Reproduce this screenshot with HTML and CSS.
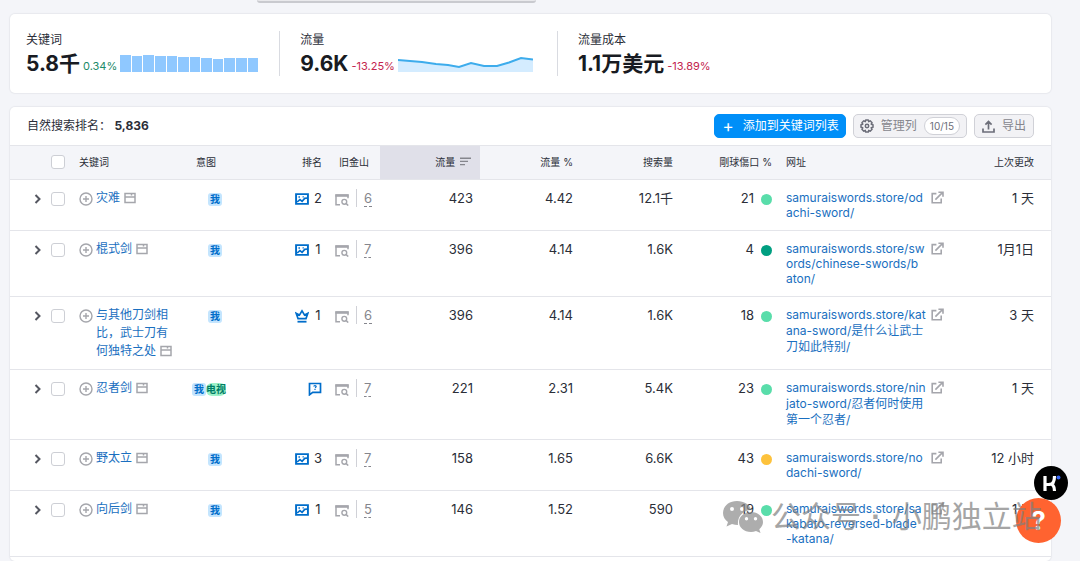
FILE: index.html
```html
<!DOCTYPE html>
<html lang="zh-CN">
<head>
<meta charset="utf-8">
<title>自然搜索排名</title>
<link rel="stylesheet" href="styles.css">
</head>
<body>
<svg class="sprite" aria-hidden="true">
  <symbol id="chevron" viewBox="0 0 8 12"><path d="M1.5 2l4 4-4 4" fill="none" stroke="currentColor" stroke-width="2"/></symbol>
  <symbol id="plus" viewBox="0 0 14 14"><circle cx="7" cy="7" r="6" fill="none" stroke="currentColor" stroke-width="1.4"/><path d="M7 4v6M4 7h6" stroke="currentColor" stroke-width="1.4"/></symbol>
  <symbol id="page" viewBox="0 0 12 12"><path d="M1 1.500h10v9H1zM1 5h10M7.500 1.500v2" fill="none" stroke="currentColor" stroke-width="1.500"/></symbol>
  <symbol id="image" viewBox="0 0 13 12"><path d="M1 1.500h11v9H1z" fill="none" stroke="currentColor" stroke-width="1.800"/><path d="M2 8.800l2.600-2.300 2 1.700L9 5.400l2.500-.4" fill="none" stroke="currentColor" stroke-width="1.500"/><path d="M3.200 3.500h1.400v1.400H3.200zM7 3.400h1.200v1.200H7z" fill="currentColor"/></symbol>
  <symbol id="crown" viewBox="0 0 14 14"><path d="M3 9.600L1.200 4.300l3.200 1.800L7 1.800l2.600 4.300 3.200-1.800L11 9.600z" fill="none" stroke="currentColor" stroke-width="1.700"/><path d="M2.500 12.700h9" stroke="currentColor" stroke-width="1.800"/></symbol>
  <symbol id="question" viewBox="0 0 13 14"><path d="M1 1.500h11v8.800H4.200L1 12.800z" fill="none" stroke="currentColor" stroke-width="1.700"/><path d="M5.300 4.600q0-1 1.200-1t1.200 1q0 .7-1.200 1.200M6.500 6.800V8" fill="none" stroke="currentColor" stroke-width="1.200"/></symbol>
  <symbol id="serp" viewBox="0 0 14 12"><path d="M5 10.800H1V1h12v3.200" fill="none" stroke="currentColor" stroke-width="1.500"/><path d="M.4.4h13.200v2.400H.4z" fill="currentColor"/><circle cx="9.300" cy="7.800" r="2.400" fill="none" stroke="currentColor" stroke-width="1.400"/><path d="M11 9.400l2.200 2.200" stroke="currentColor" stroke-width="1.500"/></symbol>
  <symbol id="external" viewBox="0 0 13 13"><path d="M5.400 2.600H1.200v9.200h9V7.400M4.400 8.600L11.400 1.600M7.400 1.200h4.600v4.600" fill="none" stroke="currentColor" stroke-width="1.600"/></symbol>
  <symbol id="sort" viewBox="0 0 11 10"><path d="M0 1.200h11M0 4.400h8M0 7.600h5" stroke="currentColor" stroke-width="1.400"/></symbol>
  <symbol id="gear" viewBox="0 0 14 14"><path d="M5.700 1h2.600l.4 1.700 1.500-.9 1.900 1.900-.9 1.500 1.800.5v2.600l-1.800.5.9 1.500-1.900 1.900-1.500-.9-.4 1.700H5.700l-.4-1.700-1.500.9-1.900-1.900.9-1.500L1 8.300V5.700l1.800-.5-.9-1.500 1.900-1.900 1.500.9z" fill="none" stroke="currentColor" stroke-width="1.500" stroke-linejoin="round"/><circle cx="7" cy="7" r="1.700" fill="none" stroke="currentColor" stroke-width="1.500"/></symbol>
  <symbol id="upload" viewBox="0 0 13 13"><path d="M1 8.500V12h11V8.500M6.500 9.500V2M3.400 4.600L6.500 1.500l3.100 3.100" fill="none" stroke="currentColor" stroke-width="1.700"/></symbol>
</svg>

<div class="popup-edge"></div>

<main class="page">
  <section class="card metrics">
    <div class="metric">
      <span class="metric-label">关键词</span>
      <div class="metric-row">
        <strong>5.8千</strong><span class="up">0.34%</span>
        <div class="bars">
          <i style="height:100%"></i><i style="height:94%"></i><i style="height:100%"></i><i style="height:97%"></i><i style="height:92%"></i><i style="height:87%"></i><i style="height:88%"></i><i style="height:84%"></i><i style="height:79%"></i><i style="height:84%"></i><i style="height:83%"></i><i style="height:82%"></i>
        </div>
      </div>
    </div>
    <div class="metric">
      <span class="metric-label">流量</span>
      <div class="metric-row">
        <strong>9.6K</strong><span class="down">-13.25%</span>
        <svg class="trend" viewBox="0 0 135 17" aria-hidden="true"><path d="M0 5l24 2 14 2 12 1 11 2 12-4 13 3h13l12-3.500 12-4.500 12 1.500V17H0z" fill="#d4ecff"/><path d="M0 5l24 2 14 2 12 1 11 2 12-4 13 3h13l12-3.500 12-4.500 12 1.500" fill="none" stroke="#3dacec" stroke-width="2"/></svg>
      </div>
    </div>
    <div class="metric">
      <span class="metric-label">流量成本</span>
      <div class="metric-row"><strong>1.1万美元</strong><span class="down">-13.89%</span></div>
    </div>
  </section>

  <section class="card rankings">
    <header class="toolbar">
      <h1>自然搜索排名： <b>5,836</b></h1>
      <button class="btn primary" type="button"><span class="plus-sign">+</span>添加到关键词列表</button>
      <button class="btn" type="button"><svg class="i14"><use href="#gear"/></svg>管理列<span class="pill">10/15</span></button>
      <button class="btn export" type="button"><svg class="i13"><use href="#upload"/></svg>导出</button>
    </header>
    <table>
      <colgroup><col class="w-open"><col class="w-check"><col class="w-key"><col class="w-intent"><col class="w-rank"><col class="w-sf"><col class="w-num"><col class="w-num"><col class="w-num"><col class="w-num"><col class="w-url"><col></colgroup>
      <thead>
        <tr>
          <th></th><th class="check"><input type="checkbox" aria-label="全选"></th>
          <th>关键词</th><th class="intent-h">意图</th><th class="rank">排名</th><th class="sf-h">旧金山</th>
          <th class="num sorted">流量 <svg class="sort"><use href="#sort"/></svg></th><th class="num">流量 %</th><th class="num">搜索量</th><th class="kd">剛球傷口 %</th><th class="url">网址</th><th class="date">上次更改</th>
        </tr>
      </thead>
      <tbody>
        <tr>
          <td class="open"><button type="button" aria-label="展开"><svg><use href="#chevron"/></svg></button></td>
          <td class="check"><input type="checkbox" aria-label="灾难"></td>
          <td><div class="key"><svg class="i14"><use href="#plus"/></svg><span><a href="#">灾难</a> <svg class="i12"><use href="#page"/></svg></span></div></td>
          <td class="intent"><span class="tag">我</span></td>
          <td class="rank"><svg class="feature"><use href="#image"/></svg><span>2</span></td>
          <td><div class="sf"><svg class="i14"><use href="#serp"/></svg><span>6</span></div></td>
          <td class="num">423</td><td class="num">4.42</td><td class="num">12.1千</td>
          <td class="kd">21<i class="dot mint"></i></td>
          <td class="url"><div><a href="#">samuraiswords.store/od<br>achi-sword/</a><svg class="i13"><use href="#external"/></svg></div></td>
          <td class="date">1 天</td>
        </tr>
        <tr>
          <td class="open"><button type="button" aria-label="展开"><svg><use href="#chevron"/></svg></button></td>
          <td class="check"><input type="checkbox" aria-label="棍式剑"></td>
          <td><div class="key"><svg class="i14"><use href="#plus"/></svg><span><a href="#">棍式剑</a> <svg class="i12"><use href="#page"/></svg></span></div></td>
          <td class="intent"><span class="tag">我</span></td>
          <td class="rank"><svg class="feature"><use href="#image"/></svg><span>1</span></td>
          <td><div class="sf"><svg class="i14"><use href="#serp"/></svg><span>7</span></div></td>
          <td class="num">396</td><td class="num">4.14</td><td class="num">1.6K</td>
          <td class="kd">4<i class="dot green"></i></td>
          <td class="url"><div><a href="#">samuraiswords.store/sw<br>ords/chinese-swords/b<br>aton/</a><svg class="i13"><use href="#external"/></svg></div></td>
          <td class="date">1月1日</td>
        </tr>
        <tr>
          <td class="open"><button type="button" aria-label="展开"><svg><use href="#chevron"/></svg></button></td>
          <td class="check"><input type="checkbox" aria-label="与其他刀剑相比，武士刀有何独特之处"></td>
          <td><div class="key"><svg class="i14"><use href="#plus"/></svg><span><a href="#">与其他刀剑相比，武士刀有何独特之处</a> <svg class="i12"><use href="#page"/></svg></span></div></td>
          <td class="intent"><span class="tag">我</span></td>
          <td class="rank"><svg class="feature"><use href="#crown"/></svg><span>1</span></td>
          <td><div class="sf"><svg class="i14"><use href="#serp"/></svg><span>6</span></div></td>
          <td class="num">396</td><td class="num">4.14</td><td class="num">1.6K</td>
          <td class="kd">18<i class="dot mint"></i></td>
          <td class="url tall"><div><a href="#">samuraiswords.store/kat<br>ana-sword/是什么让武士<br>刀如此特别/</a><svg class="i13"><use href="#external"/></svg></div></td>
          <td class="date">3 天</td>
        </tr>
        <tr>
          <td class="open"><button type="button" aria-label="展开"><svg><use href="#chevron"/></svg></button></td>
          <td class="check"><input type="checkbox" aria-label="忍者剑"></td>
          <td><div class="key"><svg class="i14"><use href="#plus"/></svg><span><a href="#">忍者剑</a> <svg class="i12"><use href="#page"/></svg></span></div></td>
          <td class="intent pair"><span class="tag">我</span><span class="tag tv">电视</span></td>
          <td class="rank only"><svg class="feature"><use href="#question"/></svg></td>
          <td><div class="sf"><svg class="i14"><use href="#serp"/></svg><span>7</span></div></td>
          <td class="num">221</td><td class="num">2.31</td><td class="num">5.4K</td>
          <td class="kd">23<i class="dot mint"></i></td>
          <td class="url tall"><div><a href="#">samuraiswords.store/nin<br>jato-sword/忍者何时使用<br>第一个忍者/</a><svg class="i13"><use href="#external"/></svg></div></td>
          <td class="date">1 天</td>
        </tr>
        <tr>
          <td class="open"><button type="button" aria-label="展开"><svg><use href="#chevron"/></svg></button></td>
          <td class="check"><input type="checkbox" aria-label="野太立"></td>
          <td><div class="key"><svg class="i14"><use href="#plus"/></svg><span><a href="#">野太立</a> <svg class="i12"><use href="#page"/></svg></span></div></td>
          <td class="intent"><span class="tag">我</span></td>
          <td class="rank"><svg class="feature"><use href="#image"/></svg><span>3</span></td>
          <td><div class="sf"><svg class="i14"><use href="#serp"/></svg><span>7</span></div></td>
          <td class="num">158</td><td class="num">1.65</td><td class="num">6.6K</td>
          <td class="kd">43<i class="dot amber"></i></td>
          <td class="url"><div><a href="#">samuraiswords.store/no<br>dachi-sword/</a><svg class="i13"><use href="#external"/></svg></div></td>
          <td class="date">12 小时</td>
        </tr>
        <tr>
          <td class="open"><button type="button" aria-label="展开"><svg><use href="#chevron"/></svg></button></td>
          <td class="check"><input type="checkbox" aria-label="向后剑"></td>
          <td><div class="key"><svg class="i14"><use href="#plus"/></svg><span><a href="#">向后剑</a> <svg class="i12"><use href="#page"/></svg></span></div></td>
          <td class="intent"><span class="tag">我</span></td>
          <td class="rank"><svg class="feature"><use href="#image"/></svg><span>1</span></td>
          <td><div class="sf"><svg class="i14"><use href="#serp"/></svg><span>5</span></div></td>
          <td class="num">146</td><td class="num">1.52</td><td class="num">590</td>
          <td class="kd">19<i class="dot mint"></i></td>
          <td class="url"><div><a href="#">samuraiswords.store/sa<br>kabato-reversed-blade<br>-katana/</a><svg class="i13"><use href="#external"/></svg></div></td>
          <td class="date">1 天</td>
        </tr>
      </tbody>
    </table>
  </section>
</main>

<button class="help" type="button" aria-label="帮助">?</button>
<button class="assistant" type="button" aria-label="助手"><svg viewBox="0 0 34 34"><path d="M11 10v15M12 18.500h3.500q5 0 5-8.500M15.500 18q5 0 5 7" fill="none" stroke="#fff" stroke-width="3.200"/><circle cx="24.500" cy="11.500" r="2" fill="#3565f5"/></svg></button>
<div class="watermark">
  <svg viewBox="0 0 42 34"><path fill="#8b8b8b" fill-rule="evenodd" d="M15 1C6.500 1 1 6.500 1 13c0 4 2 7 5 9l-1.500 4.500L10 24q3 1 6 1C15 16 22 10 29 10 28 4.500 22 1 15 1zM10 7a2 2 0 1 1 0 4 2 2 0 0 1 0-4zm10 0a2 2 0 1 1 0 4 2 2 0 0 1 0-4z"/><path fill="#8b8b8b" fill-rule="evenodd" d="M29 12c-7 0-12 4.500-12 10s5 10 12 10q2.500 0 5-1l4.500 2-1.200-3.800Q41 26 41 22c0-5.500-5-10-12-10zm-4.500 5a1.700 1.700 0 1 1 0 3.400 1.700 1.700 0 0 1 0-3.400zm9 0a1.700 1.700 0 1 1 0 3.400 1.700 1.700 0 0 1 0-3.400z"/></svg>
  <span>公众号 <b>·</b> 小鹏独立站</span>
</div>
</body>
</html>
```
FILE: styles.css
```css
* { box-sizing: border-box; }
body {
  margin: 0;
  min-height: 100vh;
  overflow: hidden;
  background: #f4f5f9;
  color: #2b2e38;
  font: 13px/18px Inter, "Noto Sans CJK SC", sans-serif;
}
a { color: #1a6fc0; text-decoration: none; }
svg { flex: none; }
button { font: inherit; }
.sprite { position: absolute; width: 0; height: 0; }
.i12 { width: 12px; height: 12px; }
.i13 { width: 13px; height: 13px; }
.i14 { width: 14px; height: 14px; }

.popup-edge {
  position: absolute;
  top: 0;
  left: 257px;
  width: 279px;
  height: 3px;
  background: #e9e9ec;
  border-bottom: 2px solid #c9cacf;
  border-radius: 0 0 6px 6px;
}
.page {
  display: flex;
  flex-direction: column;
  gap: 14px;
  min-height: 100vh;
  padding: 14px 29px 0 10px;
}
.card {
  background: #fff;
  border-radius: 5px;
  box-shadow: 0 0 1px 1px #e8e9ee;
}
.rankings { flex: 1; }

.metrics { display: flex; padding: 17px 16px; height: 79px; }
.metric { padding-right: 21px; height: 45px; }
.metric + .metric { border-left: 1px solid #d9dbe1; padding-left: 20px; }
.metric:nth-child(2) { padding-right: 24px; }
.metric-label { display: block; font-size: 12px; line-height: 17px; }
.metric-row { display: flex; align-items: flex-end; gap: 3px; line-height: 12px; font-size: 11px; height: 24px; }
.metric-row strong { font-size: 21px; line-height: 16px; color: #181b22; }
.up { color: #1d8a68; }
.down { color: #c3244e; }
.bars { display: flex; align-items: flex-end; gap: 1px; width: 138px; height: 17px; }
.bars i { flex: 1; background: #8fc8ff; }
.trend { width: 135px; height: 17px; }

.toolbar { display: flex; align-items: center; gap: 7px; height: 38px; padding: 0 17px; }
h1 { flex: 1; margin: 0; font-size: 12px; font-weight: 400; }
.btn {
  display: flex;
  align-items: center;
  gap: 7px;
  height: 24px;
  padding: 0 6px;
  border: 1px solid #d0d1d7;
  border-radius: 5px;
  background: #f2f2f5;
  color: #85868d;
  font-size: 12px;
}
.btn svg { color: #6c6e79; }
.btn.primary { background: #008ff8; border-color: #008ff8; color: #fff; }
.btn.export { padding: 0 7px; }
.plus-sign { font-size: 17px; padding: 0 2px; }
.pill { padding: 0 5px; border: 1px solid #d0d1d7; border-radius: 9px; background: #fff; font-size: 10px; line-height: 16px; color: #6c6e79; }

table { width: 100%; table-layout: fixed; border-collapse: separate; border-spacing: 0; }
.w-open { width: 38px; }
.w-check { width: 31px; }
.w-key { width: 109px; }
.w-intent { width: 38px; }
.w-rank { width: 104px; }
.w-sf { width: 50px; }
.w-num { width: 100px; }
.w-url { width: 170px; }
th {
  height: 35px;
  padding: 0 0 2px;
  background: #f4f5f9;
  border: solid #e4e5ea;
  border-width: 1px 0;
  font-size: 10px;
  font-weight: 400;
  text-align: left;
  white-space: nowrap;
}
td { padding: 9px 0; vertical-align: top; border-bottom: 1px solid #e4e5ea; white-space: nowrap; }
.open { padding-left: 24px; }
.open button { display: flex; align-items: center; height: 20px; padding: 0; border: 0; background: none; color: #555761; }
.open svg { width: 8px; height: 12px; }
.check { padding-left: 3px; }
input {
  display: block;
  appearance: none;
  width: 14px;
  height: 14px;
  margin: 0;
  border: 1px solid #cdcfd5;
  border-radius: 3px;
  background: #fff;
}
td input { margin-top: 3px; }
.key { display: flex; gap: 3px; padding-right: 13px; font-size: 12px; color: #a5a6ac; white-space: normal; }
.key > svg { margin-top: 3px; }
.key .i12 { margin-left: 1px; vertical-align: -2px; }
th.intent-h { padding-left: 8px; }
td.intent { text-align: right; padding-right: 4px; }
td.intent.pair { padding-right: 0; }
.tag {
  display: inline-block;
  margin-top: 3px;
  padding: 0 2px;
  border-radius: 3px;
  background: #c4e5fe;
  color: #006dca;
  font-size: 10px;
  font-weight: 700;
  line-height: 13px;
}
.tag.tv { padding: 0; background: #9ef2c9; border-radius: 6px; color: #007c65; }
th.rank, td.rank { text-align: right; padding-right: 8px; }
.rank span { display: inline-block; width: 8px; text-align: center; }
.feature { width: 14px; height: 14px; margin-right: 5px; color: #006dca; vertical-align: -3px; }
.only .feature { margin-right: 0; }
th.sf-h { padding-left: 9px; }
.sf { display: flex; align-items: center; padding-left: 5px; color: #a5a6ac; }
.sf svg { margin-top: 3px; height: 12px; }
.sf span { margin-left: 7px; padding-left: 7px; border-left: 1px solid #d0d1d7; color: #85868d; text-decoration: underline dashed 1px; text-underline-offset: 3px; }
th.num, td.num { text-align: right; padding-right: 7px; }
th.sorted { background: #e0e0e9; }
.sort { width: 11px; height: 10px; margin: 0 2px; vertical-align: -1px; color: #85868d; }
th.kd, td.kd { text-align: right; padding-right: 8px; }
.dot { display: inline-block; width: 11px; height: 11px; margin-left: 7px; border-radius: 50%; vertical-align: -2px; }
.mint { background: #59ddaa; }
.green { background: #009f81; }
.amber { background: #fdc23c; }
th.url, td.url { padding-left: 6px; }
td.url { padding-top: 10px; padding-bottom: 10px; line-height: 15px; font-size: 12px; color: #a5a6ac; }
td.url.tall { padding-bottom: 11px; line-height: 16px; }
td.url div { display: flex; justify-content: space-between; padding-right: 6px; }
td.url svg { margin-top: 1px; }
th.date, td.date { text-align: right; padding-right: 17px; }

.assistant, .help { position: absolute; border: 0; border-radius: 50%; padding: 0; }
.assistant { left: 1034px; top: 466px; width: 34px; height: 34px; background: #000; }
.assistant svg { display: block; width: 34px; height: 34px; }
.help { left: 1016px; top: 498px; width: 45px; height: 45px; background: #ff6330; color: #fff; font-size: 26px; font-weight: 700; }
.watermark {
  position: absolute;
  left: 722px;
  top: 499px;
  display: flex;
  align-items: center;
  gap: 7px;
  opacity: .7;
  color: #808080;
  font: 30px/36px "Liberation Sans", "Noto Sans CJK SC", sans-serif;
  white-space: nowrap;
  pointer-events: none;
}
.watermark b { padding: 0 2px; }
.watermark svg { width: 42px; height: 34px; }
```
